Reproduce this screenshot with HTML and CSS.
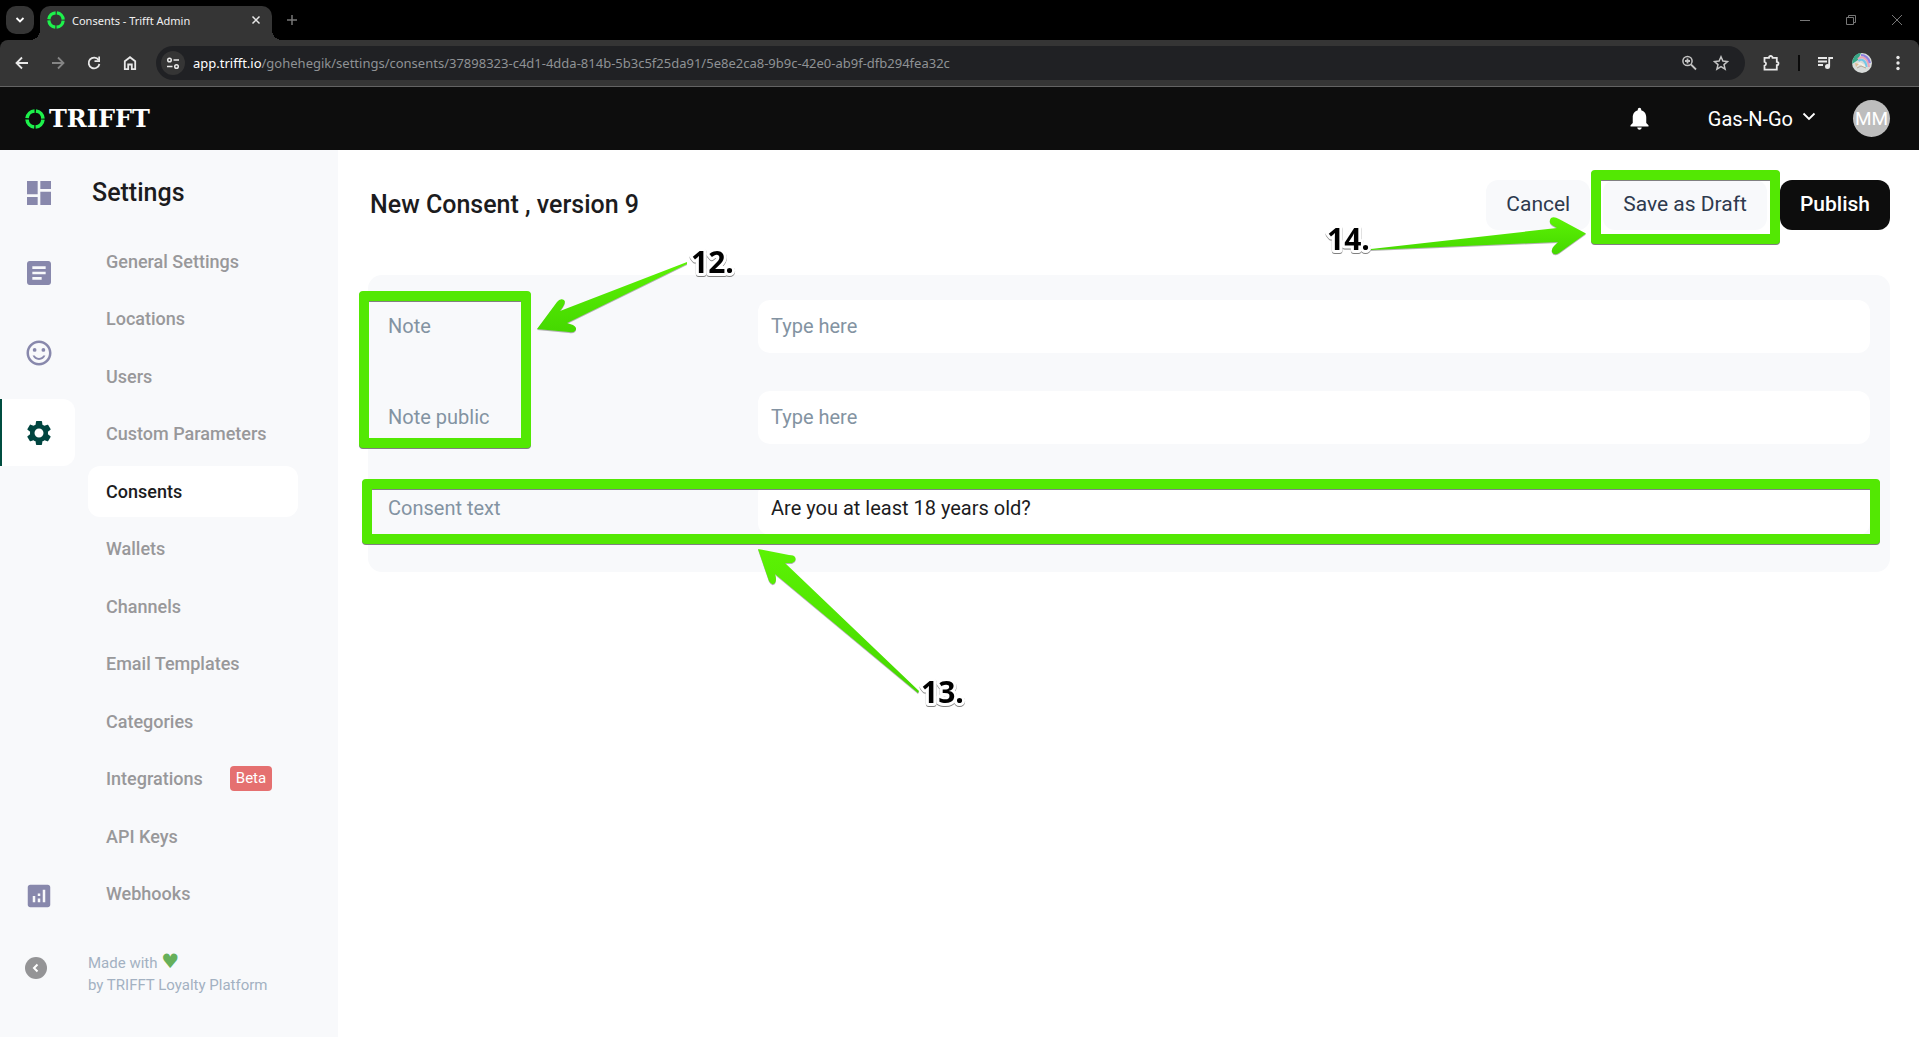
FILE: index.html
```html
<!DOCTYPE html>
<html lang="en">
<head>
<meta charset="utf-8">
<title>Consents - Trifft Admin</title>
<link rel="stylesheet" href="styles.css">
</head>
<body>
<svg class="defs" aria-hidden="true">
  <defs>
    <symbol id="ring" viewBox="0 0 20 20">
      <circle cx="10" cy="10" r="8" fill="none" stroke="#1df24b" stroke-width="3.6" stroke-dasharray="11.17 1.4" stroke-dashoffset="-0.7"/>
    </symbol>
    <linearGradient id="green" x1="0" y1="0" x2="0" y2="1">
      <stop offset="0" stop-color="#5cf204"/><stop offset="1" stop-color="#45d800"/>
    </linearGradient>
  </defs>
</svg>

<div class="browser">
  <div class="tabstrip">
    <button class="tab-search" aria-label="Search tabs"><svg width="10" height="10" viewBox="0 0 10 10"><path d="M1.5 3 5 6.5 8.5 3" class="line bold"/></svg></button>
    <div class="tab">
      <svg width="18" height="18"><use href="#ring"/></svg>
      <span class="tab-title">Consents - Trifft Admin</span>
      <button class="plain" aria-label="Close tab"><svg width="10" height="10" viewBox="0 0 10 10"><path d="M1.5 1.5l7 7M8.5 1.5l-7 7" class="line"/></svg></button>
    </div>
    <button class="plain new-tab" aria-label="New tab"><svg width="12" height="12" viewBox="0 0 12 12"><path d="M6 1v10M1 6h10" class="line"/></svg></button>
    <div class="window-buttons">
      <button class="plain" aria-label="Minimize"><svg width="10" height="10" viewBox="0 0 10 10"><path d="M0 5.5h10" class="thin"/></svg></button>
      <button class="plain" aria-label="Restore"><svg width="10" height="10" viewBox="0 0 10 10"><path d="M.5 2.500h7v7h-7zM2.500 2.500v-2h7v7h-2" class="thin"/></svg></button>
      <button class="plain" aria-label="Close"><svg width="10" height="10" viewBox="0 0 10 10"><path d="M0 0l10 10M10 0L0 10" class="thin"/></svg></button>
    </div>
  </div>
  <div class="toolbar">
    <div class="nav-buttons">
      <button class="plain" aria-label="Back"><svg width="16" height="16" viewBox="0 0 16 16"><path d="M14 8H3M8 2.500 2.500 8 8 13.500" class="line bold"/></svg></button>
      <button class="plain dim" aria-label="Forward"><svg width="16" height="16" viewBox="0 0 16 16"><path d="M2 8h11M8 2.500 13.500 8 8 13.500" class="line bold"/></svg></button>
      <button class="plain" aria-label="Reload"><svg width="16" height="16" viewBox="0 0 16 16"><path d="M12.600 5A5.400 5.400 0 1 0 13.400 9" class="line bold"/><path d="M14 1.500V7H8.500V5.300h3.800V1.500z" fill="currentColor"/></svg></button>
      <button class="plain" aria-label="Home"><svg width="16" height="16" viewBox="0 0 16 16"><path d="M2.800 6.300 8 2.200l5.200 4.100v7.900H9.800V9.500H6.200v4.700H2.800z" class="line bold"/></svg></button>
    </div>
    <div class="omnibox">
      <button class="site-info" aria-label="View site information"><svg width="14" height="14" viewBox="0 0 14 14"><circle cx="3.500" cy="4" r="1.800" class="line"/><path d="M7.500 4H13M1 10.500h5.500" class="line"/><circle cx="10.500" cy="10.500" r="1.800" class="line"/></svg></button>
      <div class="url"><b>app.trifft.io</b>/gohehegik/settings/consents/37898323-c4d1-4dda-814b-5b3c5f25da91/5e8e2ca8-9b9c-42e0-ab9f-dfb294fea32c</div>
      <button class="plain soft" aria-label="Zoom"><svg width="16" height="16" viewBox="0 0 16 16"><circle cx="6.500" cy="6" r="4.600" class="line"/><path d="M10 9.500 15 14.500" class="line bold"/><path d="M6.500 3.500v5M4 6h5" class="line bold"/></svg></button>
      <button class="plain soft" aria-label="Bookmark"><svg width="16" height="16" viewBox="0 0 16 16"><path d="M8 1.800 9.900 6.100 14.500 6.500 11 9.600 12.100 14.200 8 11.700 3.900 14.200 5 9.600 1.500 6.500 6.100 6.100z" class="line"/></svg></button>
    </div>
    <div class="tools">
      <button class="plain" aria-label="Extensions"><svg width="18" height="18" viewBox="0 0 18 18"><path d="M2.500 3.800H7a1.800 1.800 0 0 1 3.600 0h4.200v4a1.700 1.700 0 0 1 0 3.400v4.500H2.500v-4a2 2 0 0 0 0-3.900z" class="line bold"/></svg></button>
      <span class="divider"></span>
      <button class="plain" aria-label="Media"><svg width="16" height="16" viewBox="0 0 16 16"><path d="M0 3h9M0 6.500h9M0 10h5" class="line bold"/><circle cx="9.500" cy="11.500" r="2.500" fill="currentColor"/><path d="M11.200 11.500V3H15" class="line bold"/></svg></button>
      <button class="plain" aria-label="Profile"><svg width="20" height="20" viewBox="0 0 20 20"><circle cx="10" cy="10" r="10" fill="#d9dcda"/><path d="M1 6A10 10 0 0 1 9 .1L6 7 0 11z" fill="#36a887"/><path d="M6 6C10 2 16 5 17 14" fill="none" stroke="#e9a4b8" stroke-width="2"/><path d="M9 2c4 0 8 3 9 8" fill="none" stroke="#8d7fe0" stroke-width="2"/><path d="M6.500 8C10 5 14 8 14.500 14" fill="none" stroke="#75c7e8" stroke-width="2"/><path d="M5 13c2-4 4-3 8 1" fill="none" stroke="#f4f1e6" stroke-width="2"/><path d="M3 10l4 1-3 3z" fill="#dfbc94"/><path d="M5 15l4-2 5 2" fill="none" stroke="#b5aa98" stroke-width="1"/></svg></button>
      <button class="plain" aria-label="Menu"><svg width="16" height="16" viewBox="0 0 16 16" fill="currentColor"><circle cx="8" cy="2.500" r="1.700"/><circle cx="8" cy="8" r="1.700"/><circle cx="8" cy="13.500" r="1.700"/></svg></button>
    </div>
  </div>
</div>

<header class="app-header">
  <a class="logo" href="#"><svg width="20" height="20"><use href="#ring"/></svg>TRIFFT</a>
  <button class="plain bell" aria-label="Notifications"><svg width="27" height="27" viewBox="0 0 24 24" fill="currentColor"><path d="M12 22c1.100 0 2-.9 2-2h-4c0 1.100.89 2 2 2zm6-6v-5c0-3.070-1.640-5.640-4.500-6.320V4c0-.83-.67-1.500-1.500-1.500s-1.500.67-1.500 1.500v.68C7.630 5.360 6 7.920 6 11v5l-2 2v1h16v-1l-2-2z"/></svg></button>
  <button class="plain org">Gas-N-Go <svg width="14" height="14" viewBox="0 0 14 14"><path d="M1.500 1.500 7 7 12.500 1.500" class="line bold"/></svg></button>
  <button class="avatar">MM</button>
</header>

<div class="shell">
  <nav class="rail" aria-label="Sections">
    <a href="#" aria-label="Dashboard"><svg width="32" height="32" viewBox="0 0 24 24"><path d="M3 13h8V3H3v10zm0 8h8v-6H3v6zm10 0h8V11h-8v10zm0-18v6h8V3h-8z"/></svg></a>
    <a href="#" aria-label="Content"><svg width="32" height="32" viewBox="0 0 24 24"><path d="M19 3H5c-1.100 0-2 .9-2 2v14c0 1.100.9 2 2 2h14c1.100 0 2-.9 2-2V5c0-1.100-.9-2-2-2zm-5 14H7v-2h7v2zm3-4H7v-2h10v2zm0-4H7V7h10v2z"/></svg></a>
    <a href="#" aria-label="Customers"><svg width="30" height="30" viewBox="0 0 24 24"><path d="M11.990 2C6.470 2 2 6.480 2 12s4.470 10 9.990 10C17.520 22 22 17.520 22 12S17.520 2 11.990 2zM12 20c-4.420 0-8-3.580-8-8s3.580-8 8-8 8 3.580 8 8-3.580 8-8 8z"/><circle cx="8.500" cy="9.500" r="1.500"/><circle cx="15.500" cy="9.500" r="1.500"/><path d="M12 16c-1.480 0-2.750-.81-3.450-2H6.880c.8 2.050 2.790 3.500 5.120 3.500s4.320-1.450 5.120-3.500h-1.670c-.7 1.190-1.970 2-3.450 2z"/></svg></a>
    <a href="#" class="active" aria-label="Settings"><svg width="30" height="30" viewBox="0 0 24 24"><path d="M19.140 12.940c.04-.3.06-.61.06-.94 0-.32-.02-.64-.07-.94l2.030-1.580c.18-.14.230-.41.120-.61l-1.920-3.320c-.12-.22-.37-.29-.59-.22l-2.390.96c-.5-.38-1.030-.7-1.620-.94l-.36-2.540c-.04-.24-.24-.41-.48-.41h-3.840c-.24 0-.43.17-.47.41l-.36 2.540c-.59.24-1.130.57-1.620.94l-2.390-.96c-.22-.08-.47 0-.59.22L2.740 8.870c-.12.210-.08.470.120.610l2.030 1.580c-.05.300-.09.630-.09.940s.020.640.070.940l-2.030 1.580c-.18.140-.23.410-.12.610l1.920 3.320c.12.220.37.290.59.220l2.390-.96c.5.380 1.030.7 1.620.94l.36 2.540c.05.240.240.410.480.410h3.840c.24 0 .440-.17.470-.41l.36-2.540c.59-.24 1.130-.56 1.620-.94l2.390.96c.22.080.470 0 .590-.22l1.920-3.320c.12-.22.070-.47-.12-.61l-2.010-1.580zM12 15.600c-1.980 0-3.600-1.620-3.600-3.600s1.620-3.600 3.600-3.600 3.600 1.620 3.600 3.600-1.620 3.600-3.600 3.600z"/></svg></a>
    <a href="#" class="reports" aria-label="Reports"><svg width="30" height="30" viewBox="0 0 24 24"><path d="M19 3H5c-1.100 0-2 .9-2 2v14c0 1.100.9 2 2 2h14c1.100 0 2-.9 2-2V5c0-1.100-.9-2-2-2zM9 17H7v-5h2v5zm4 0h-2v-3h2v3zm0-5h-2v-2h2v2zm4 5h-2V7h2v10z"/></svg></a>
    <button class="collapse" aria-label="Collapse menu"><svg width="12" height="12" viewBox="0 0 12 12"><path d="M7.500 2.500 4 6l3.500 3.500" class="line heavy"/></svg></button>
  </nav>

  <aside class="menu">
    <h2>Settings</h2>
    <ul>
      <li><a href="#">General Settings</a></li>
      <li><a href="#">Locations</a></li>
      <li><a href="#">Users</a></li>
      <li><a href="#">Custom Parameters</a></li>
      <li><a href="#" class="current">Consents</a></li>
      <li><a href="#">Wallets</a></li>
      <li><a href="#">Channels</a></li>
      <li><a href="#">Email Templates</a></li>
      <li><a href="#">Categories</a></li>
      <li><a href="#">Integrations <span class="beta">Beta</span></a></li>
      <li><a href="#">API Keys</a></li>
      <li><a href="#">Webhooks</a></li>
    </ul>
    <p class="credit">Made with <span class="heart">♥</span><br>by TRIFFT Loyalty Platform</p>
  </aside>

  <main>
    <div class="page-head">
      <h1>New Consent , version 9</h1>
      <button class="btn">Cancel</button>
      <div class="anchor">
        <button class="btn">Save as Draft</button>
        <span class="mark mark-save"></span>
        <svg class="notes" width="1" height="1">
          <path class="arrow" d="M-232 69 L-46 48 L-51 45 Q-55 42 -52 38 Q-49 36 -44 39 L-17 53.500 L-44 73 Q-49 76 -51 72 Q-52 69 -49 66 L-45 62 L-232 70z"/>
          <text x="-276" y="70">14.</text>
        </svg>
      </div>
      <button class="btn primary">Publish</button>
    </div>

    <form class="card">
      <div class="field"><label for="note">Note</label><input id="note" type="text" placeholder="Type here"></div>
      <div class="field"><label for="note-public">Note public</label><input id="note-public" type="text" placeholder="Type here"></div>
      <div class="field"><label for="consent-text">Consent text</label><input id="consent-text" type="text" value="Are you at least 18 years old?"></div>
      <span class="mark mark-notes"></span>
      <span class="mark mark-consent"></span>
      <svg class="notes" width="1" height="1">
        <path class="arrow" d="M319 -13 L319 -11 L199 48 L205 50 Q210 53 207 56 Q205 58 201 57 L169 54 L189 27 Q192 23 196 25 Q199 27 192 36z"/>
        <path class="arrow" d="M550 418 L551 416 L417 288 L424 288 Q429 286 427 282 Q426 280 421 280 L390 274 L401 306 Q404 311 407 308 Q409 305 407 299z"/>
        <text x="323" y="-2">12.</text>
        <text x="553" y="428">13.</text>
      </svg>
    </form>
  </main>
</div>
</body>
</html>
```
FILE: styles.css
```css
* { box-sizing: border-box; }

body {
  margin: 0;
  min-height: 100vh;
  display: flex;
  flex-direction: column;
  font-family: Roboto, "Liberation Sans", sans-serif;
  background: #fff;
  color: #1c1c1e;
}

button, input { font: inherit; }
a { color: inherit; text-decoration: none; }
svg { display: block; flex: none; }

.defs { position: absolute; width: 0; height: 0; }

.line { fill: none; stroke: currentColor; stroke-width: 1.5; }
.line.bold { stroke-width: 1.8; }
.line.heavy { stroke-width: 2; }
.thin { fill: none; stroke: currentColor; stroke-width: 1; }

.plain {
  border: 0;
  padding: 0;
  background: none;
  color: #e8e8e8;
  display: flex;
  align-items: center;
}

/* Browser chrome */
.browser {
  background: #000;
  font-family: "Noto Sans", "Open Sans", sans-serif;
}

.tabstrip {
  display: flex;
  align-items: center;
  height: 40px;
  padding: 0 17px 0 6px;
}

.tab-search {
  width: 28px;
  height: 28px;
  border: 0;
  border-radius: 10px;
  background: #353535;
  color: #fff;
  display: grid;
  place-items: center;
}

.tab {
  position: relative;
  display: flex;
  align-items: center;
  gap: 7px;
  width: 232px;
  height: 34px;
  margin: 6px 14px 0 6px;
  padding: 0 11px 6px 7px;
  border-radius: 10px 10px 0 0;
  background: #353535;
}

.tab::before, .tab::after {
  content: "";
  position: absolute;
  bottom: 0;
  width: 10px;
  height: 10px;
}
.tab::before { left: -10px; background: radial-gradient(circle at 0 0, transparent 10px, #353535 10px); }
.tab::after { right: -10px; background: radial-gradient(circle at 100% 0, transparent 10px, #353535 10px); }

.tab-title { flex: 1; font-size: 11px; color: #f1f1f1; white-space: nowrap; }
.new-tab { color: #777; }
.window-buttons { display: flex; gap: 36px; margin-left: auto; }
.window-buttons .plain { color: #777; }

.toolbar {
  display: flex;
  align-items: center;
  height: 47px;
  padding: 0 13px 0 14px;
  background: #353535;
  border-bottom: 1px solid #636363;
  border-radius: 8px 8px 0 0;
}

.nav-buttons { display: flex; gap: 20px; }
.dim { color: #858585; }

.omnibox {
  flex: 1;
  display: flex;
  align-items: center;
  gap: 16px;
  height: 34px;
  margin: 0 17px 0 18px;
  padding: 0 16px 0 5px;
  border-radius: 17px;
  background: #202124;
}

.site-info {
  width: 24px;
  height: 24px;
  padding: 0;
  border: 0;
  border-radius: 50%;
  background: #353535;
  color: #e8e8e8;
  display: grid;
  place-items: center;
}

.url { flex: 1; margin-left: -8px; font-size: 13px; color: #8f9295; white-space: nowrap; }
.url b { font-weight: 400; color: #fff; }
.soft { color: #c4c4c4; }

.tools { display: flex; align-items: center; gap: 18px; }
.divider { width: 2px; height: 16px; background: #0a0a0a; }

/* Application header */
.app-header {
  display: flex;
  align-items: center;
  height: 63px;
  padding: 0 29px 0 25px;
  background: #0d0d0d;
  color: #fff;
}

.logo {
  display: flex;
  align-items: center;
  gap: 4px;
  margin-right: auto;
  font: 700 24px/24px "DejaVu Serif", serif;
}

.bell { margin-right: 55px; color: #fff; }
.org { gap: 9px; margin-right: 37px; font-size: 20px; color: #fff; }

.avatar {
  width: 37px;
  height: 37px;
  padding: 0;
  border: 0;
  border-radius: 50%;
  background: #bdbdbd;
  color: #fff;
  font-size: 19px;
}

/* Layout */
.shell { flex: 1; display: flex; }

.rail {
  display: flex;
  flex-direction: column;
  gap: 13px;
  width: 75px;
  padding: 9px 0 58px;
  background: #f8f9fb;
}

.rail a {
  display: grid;
  place-items: center;
  height: 67px;
  border-left: 2px solid transparent;
}
.rail svg { fill: #8888ac; }
.rail .active { background: #fff; border-left-color: #004d40; border-radius: 0 12px 12px 0; }
.rail .active svg { fill: #004540; }
.rail .reports { margin-top: auto; }

.collapse {
  display: grid;
  place-items: center;
  width: 22px;
  height: 22px;
  margin: 15px 0 0 25px;
  padding: 0;
  border: 0;
  border-radius: 50%;
  background: #949496;
  color: #fff;
}
.collapse svg { fill: none; }

.menu {
  display: flex;
  flex-direction: column;
  width: 263px;
  padding: 27px 40px 41px 13px;
  background: #f8f9fb;
}

.menu h2 {
  margin: 0 0 27px 4px;
  font-size: 25px;
  line-height: 32px;
  font-weight: 500;
}

.menu ul {
  flex: 1;
  display: flex;
  flex-direction: column;
  justify-content: space-between;
  margin: 0;
  padding: 0;
  list-style: none;
}

.menu li a {
  display: flex;
  align-items: center;
  justify-content: flex-start;
  gap: 27px;
  height: 51px;
  padding: 0 18px;
  border-radius: 12px;
  font-size: 18px;
  font-weight: 500;
  color: #98989a;
}
.menu li .current { background: #fff; color: #1c1c1e; }

.beta {
  padding: 0 6px;
  border-radius: 4px;
  background: #e57070;
  color: #fff;
  font-size: 15px;
  font-weight: 400;
  line-height: 25px;
}

.credit {
  margin: 33px 0 0;
  font-size: 15px;
  line-height: 22px;
  color: #a3b1c2;
  white-space: nowrap;
}
.heart { font-family: "DejaVu Sans", sans-serif; font-size: 20px; line-height: 16px; color: #66b05a; }

main { flex: 1; padding: 30px 29px 0 30px; }

.page-head {
  display: flex;
  align-items: center;
  gap: 13px;
  margin-bottom: 45px;
}

.page-head h1 {
  flex: 1;
  margin: 0 0 0 2px;
  font-size: 25px;
  line-height: 30px;
  font-weight: 500;
}

.btn {
  display: block;
  height: 50px;
  padding: 0 20px 2px;
  border: 0;
  border-radius: 12px;
  background: #f8f9fb;
  color: #2e3a4e;
  font-size: 21px;
  white-space: nowrap;
}
.btn.primary { background: #0d0d0d; color: #fff; font-weight: 500; }

.anchor { position: relative; }

.card {
  position: relative;
  display: flex;
  flex-direction: column;
  gap: 38px;
  padding: 25px 20px 37px;
  border-radius: 14px;
  background: #f8f9fb;
}

.field { display: flex; align-items: center; }
.field label { width: 370px; padding-bottom: 2px; font-size: 20px; color: #8393a2; }

.field input {
  flex: 1;
  min-width: 0;
  height: 53px;
  padding: 0 13px 2px;
  border: 0;
  border-radius: 12px;
  background: #fff;
  color: #1c1c1e;
  font-size: 20px;
}
.field input::placeholder { color: #8393a2; opacity: 1; }

/* Numbered call-outs over the form */
.mark {
  position: absolute;
  border: 10px solid #53e803;
  border-radius: 4px;
  filter: drop-shadow(0 1px 0 #808080);
  pointer-events: none;
}
.mark-save { inset: -10px -13px -14px -12px; }
.mark-notes { left: -9px; top: 16px; width: 172px; height: 157px; }
.mark-consent { left: -6px; right: 10px; top: 204px; height: 65px; }

.notes {
  position: absolute;
  left: 0;
  top: 0;
  overflow: visible;
  pointer-events: none;
}

.arrow { fill: url(#green); filter: drop-shadow(0 1px 0 #80808099); }

.notes text {
  font: 700 30px "Open Sans", "Noto Sans", sans-serif;
  fill: #000;
  stroke: #fff;
  stroke-width: 6px;
  stroke-linejoin: round;
  paint-order: stroke;
  filter: drop-shadow(0 1px 0 #808080);
}
```
